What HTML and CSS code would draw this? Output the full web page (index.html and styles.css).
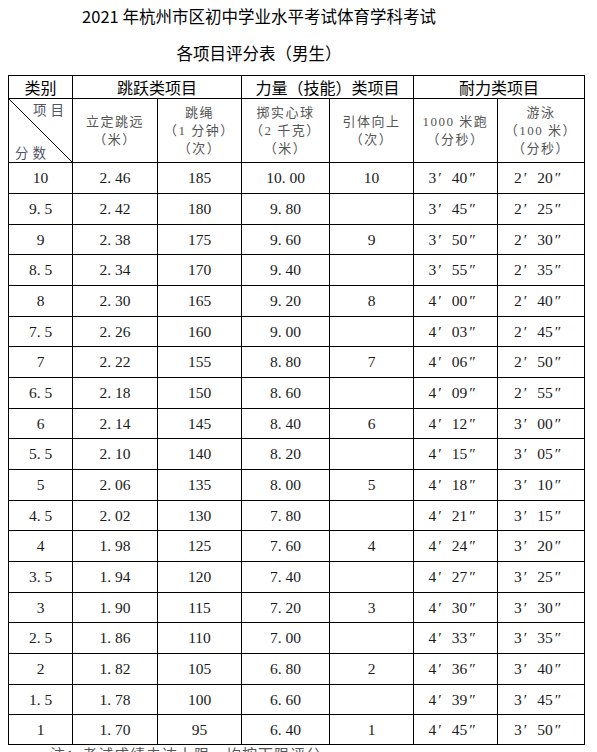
FILE: index.html
```html
<!DOCTYPE html>
<html lang="zh-CN">
<head>
<meta charset="utf-8">
<title>2021年杭州市区初中学业水平考试体育学科考试各项目评分表（男生）</title>
<link rel="stylesheet" href="styles.css">
</head>
<body>
<div class="page">
  <header class="title">
    <h1 class="title-line">2021 年杭州市区初中学业水平考试体育学科考试</h1>
    <h2 class="title-line">各项目评分表（男生）</h2>
  </header>

  <div class="sheet">
    <div class="cell head">类别</div>
    <div class="cell head span2">跳跃类项目</div>
    <div class="cell head span2">力量（技能）类项目</div>
    <div class="cell head span2">耐力类项目</div>

    <div class="cell diag"><span class="diag-top">项目</span><span class="diag-bottom">分数</span></div>
    <div class="cell sub"><span>立定跳远</span><span>（米）</span></div>
    <div class="cell sub"><span>跳绳</span><span>（1 分钟）</span><span>（次）</span></div>
    <div class="cell sub"><span>掷实心球</span><span>（2 千克）</span><span>（米）</span></div>
    <div class="cell sub"><span>引体向上</span><span>（次）</span></div>
    <div class="cell sub"><span>1000 米跑</span><span>（分秒）</span></div>
    <div class="cell sub"><span>游泳</span><span>（100 米）</span><span>（分秒）</span></div>

    <div class="cell num">10</div><div class="cell num">2<span class="d">.</span>46</div><div class="cell num">185</div><div class="cell num">10<span class="d">.</span>00</div><div class="cell num">10</div><div class="cell num">3<span class="p">′</span>40<span class="p">″</span></div><div class="cell num">2<span class="p">′</span>20<span class="p">″</span></div>
    <div class="cell num">9<span class="d">.</span>5</div><div class="cell num">2<span class="d">.</span>42</div><div class="cell num">180</div><div class="cell num">9<span class="d">.</span>80</div><div class="cell num"></div><div class="cell num">3<span class="p">′</span>45<span class="p">″</span></div><div class="cell num">2<span class="p">′</span>25<span class="p">″</span></div>
    <div class="cell num">9</div><div class="cell num">2<span class="d">.</span>38</div><div class="cell num">175</div><div class="cell num">9<span class="d">.</span>60</div><div class="cell num">9</div><div class="cell num">3<span class="p">′</span>50<span class="p">″</span></div><div class="cell num">2<span class="p">′</span>30<span class="p">″</span></div>
    <div class="cell num">8<span class="d">.</span>5</div><div class="cell num">2<span class="d">.</span>34</div><div class="cell num">170</div><div class="cell num">9<span class="d">.</span>40</div><div class="cell num"></div><div class="cell num">3<span class="p">′</span>55<span class="p">″</span></div><div class="cell num">2<span class="p">′</span>35<span class="p">″</span></div>
    <div class="cell num">8</div><div class="cell num">2<span class="d">.</span>30</div><div class="cell num">165</div><div class="cell num">9<span class="d">.</span>20</div><div class="cell num">8</div><div class="cell num">4<span class="p">′</span>00<span class="p">″</span></div><div class="cell num">2<span class="p">′</span>40<span class="p">″</span></div>
    <div class="cell num">7<span class="d">.</span>5</div><div class="cell num">2<span class="d">.</span>26</div><div class="cell num">160</div><div class="cell num">9<span class="d">.</span>00</div><div class="cell num"></div><div class="cell num">4<span class="p">′</span>03<span class="p">″</span></div><div class="cell num">2<span class="p">′</span>45<span class="p">″</span></div>
    <div class="cell num">7</div><div class="cell num">2<span class="d">.</span>22</div><div class="cell num">155</div><div class="cell num">8<span class="d">.</span>80</div><div class="cell num">7</div><div class="cell num">4<span class="p">′</span>06<span class="p">″</span></div><div class="cell num">2<span class="p">′</span>50<span class="p">″</span></div>
    <div class="cell num">6<span class="d">.</span>5</div><div class="cell num">2<span class="d">.</span>18</div><div class="cell num">150</div><div class="cell num">8<span class="d">.</span>60</div><div class="cell num"></div><div class="cell num">4<span class="p">′</span>09<span class="p">″</span></div><div class="cell num">2<span class="p">′</span>55<span class="p">″</span></div>
    <div class="cell num">6</div><div class="cell num">2<span class="d">.</span>14</div><div class="cell num">145</div><div class="cell num">8<span class="d">.</span>40</div><div class="cell num">6</div><div class="cell num">4<span class="p">′</span>12<span class="p">″</span></div><div class="cell num">3<span class="p">′</span>00<span class="p">″</span></div>
    <div class="cell num">5<span class="d">.</span>5</div><div class="cell num">2<span class="d">.</span>10</div><div class="cell num">140</div><div class="cell num">8<span class="d">.</span>20</div><div class="cell num"></div><div class="cell num">4<span class="p">′</span>15<span class="p">″</span></div><div class="cell num">3<span class="p">′</span>05<span class="p">″</span></div>
    <div class="cell num">5</div><div class="cell num">2<span class="d">.</span>06</div><div class="cell num">135</div><div class="cell num">8<span class="d">.</span>00</div><div class="cell num">5</div><div class="cell num">4<span class="p">′</span>18<span class="p">″</span></div><div class="cell num">3<span class="p">′</span>10<span class="p">″</span></div>
    <div class="cell num">4<span class="d">.</span>5</div><div class="cell num">2<span class="d">.</span>02</div><div class="cell num">130</div><div class="cell num">7<span class="d">.</span>80</div><div class="cell num"></div><div class="cell num">4<span class="p">′</span>21<span class="p">″</span></div><div class="cell num">3<span class="p">′</span>15<span class="p">″</span></div>
    <div class="cell num">4</div><div class="cell num">1<span class="d">.</span>98</div><div class="cell num">125</div><div class="cell num">7<span class="d">.</span>60</div><div class="cell num">4</div><div class="cell num">4<span class="p">′</span>24<span class="p">″</span></div><div class="cell num">3<span class="p">′</span>20<span class="p">″</span></div>
    <div class="cell num">3<span class="d">.</span>5</div><div class="cell num">1<span class="d">.</span>94</div><div class="cell num">120</div><div class="cell num">7<span class="d">.</span>40</div><div class="cell num"></div><div class="cell num">4<span class="p">′</span>27<span class="p">″</span></div><div class="cell num">3<span class="p">′</span>25<span class="p">″</span></div>
    <div class="cell num">3</div><div class="cell num">1<span class="d">.</span>90</div><div class="cell num">115</div><div class="cell num">7<span class="d">.</span>20</div><div class="cell num">3</div><div class="cell num">4<span class="p">′</span>30<span class="p">″</span></div><div class="cell num">3<span class="p">′</span>30<span class="p">″</span></div>
    <div class="cell num">2<span class="d">.</span>5</div><div class="cell num">1<span class="d">.</span>86</div><div class="cell num">110</div><div class="cell num">7<span class="d">.</span>00</div><div class="cell num"></div><div class="cell num">4<span class="p">′</span>33<span class="p">″</span></div><div class="cell num">3<span class="p">′</span>35<span class="p">″</span></div>
    <div class="cell num">2</div><div class="cell num">1<span class="d">.</span>82</div><div class="cell num">105</div><div class="cell num">6<span class="d">.</span>80</div><div class="cell num">2</div><div class="cell num">4<span class="p">′</span>36<span class="p">″</span></div><div class="cell num">3<span class="p">′</span>40<span class="p">″</span></div>
    <div class="cell num">1<span class="d">.</span>5</div><div class="cell num">1<span class="d">.</span>78</div><div class="cell num">100</div><div class="cell num">6<span class="d">.</span>60</div><div class="cell num"></div><div class="cell num">4<span class="p">′</span>39<span class="p">″</span></div><div class="cell num">3<span class="p">′</span>45<span class="p">″</span></div>
    <div class="cell num">1</div><div class="cell num">1<span class="d">.</span>70</div><div class="cell num">95</div><div class="cell num">6<span class="d">.</span>40</div><div class="cell num">1</div><div class="cell num">4<span class="p">′</span>45<span class="p">″</span></div><div class="cell num">3<span class="p">′</span>50<span class="p">″</span></div>
  </div>

  <p class="note">注：考试成绩未达上限，均按下限评分。</p>
</div>
</body>
</html>
```

FILE: styles.css
```css
html, body {
  margin: 0;
  padding: 0;
  background: #fff;
  overflow: hidden;
}

.page {
  width: 597px;
  height: 752px;
  overflow: hidden;
}

.title {
  width: 518px;
  text-align: center;
  font-family: "Noto Sans CJK SC", "Noto Sans", sans-serif;
  color: #000;
  display: flex;
  flex-direction: column;
  gap: 5px;
  margin-bottom: 6px;
}

.title-line {
  margin: 0;
  font-size: 16.5px;
  font-weight: normal;
  line-height: 32px;
}

.sheet {
  margin-left: 8px;
  width: 577px;
  box-sizing: border-box;
  display: grid;
  grid-template-columns: 63px 84px 83px 87px 83px 83px 86px;
  grid-template-rows: 22px 63px repeat(6, 30px 30px 29px) 29px;
  gap: 1px;
  padding: 1px;
  background: #000;
}

.cell {
  background: #fff;
  display: flex;
  align-items: center;
  justify-content: center;
  white-space: nowrap;
}

.span2 {
  grid-column: span 2;
}

.head {
  font-family: "Noto Sans CJK SC", sans-serif;
  font-size: 16px;
  color: #000;
  line-height: 20px;
}

.sub {
  flex-direction: column;
  font-family: "Liberation Serif", "Noto Sans CJK SC", serif;
  font-size: 13px;
  letter-spacing: 1.5px;
  line-height: 18px;
  color: #555;
}

.diag {
  flex-direction: column;
  align-items: stretch;
  justify-content: space-between;
  padding: 2px 4px 2px 6px;
  font-family: "Noto Sans CJK SC", sans-serif;
  font-size: 13.5px;
  letter-spacing: 4px;
  line-height: 16px;
  color: #4f5566;
  background: linear-gradient(to top right, #fff calc(50% - 0.7px), #000 50%, #fff calc(50% + 0.7px));
}

.diag-top {
  text-align: right;
}

.diag-bottom {
  text-align: left;
}

.num {
  font-family: "Liberation Serif", "DejaVu Serif", serif;
  font-size: 15.5px;
  color: #1a1a1a;
}

.d {
  display: inline-block;
  width: 0.5em;
  text-align: left;
}

.p {
  display: inline-block;
  width: 1em;
  text-align: left;
  padding-left: 2px;
  box-sizing: border-box;
}

.note {
  margin: 1px 0 0 50px;
  font-family: "Noto Sans CJK SC", sans-serif;
  font-size: 15px;
  letter-spacing: 1px;
  line-height: 16px;
  color: #555;
}
```
